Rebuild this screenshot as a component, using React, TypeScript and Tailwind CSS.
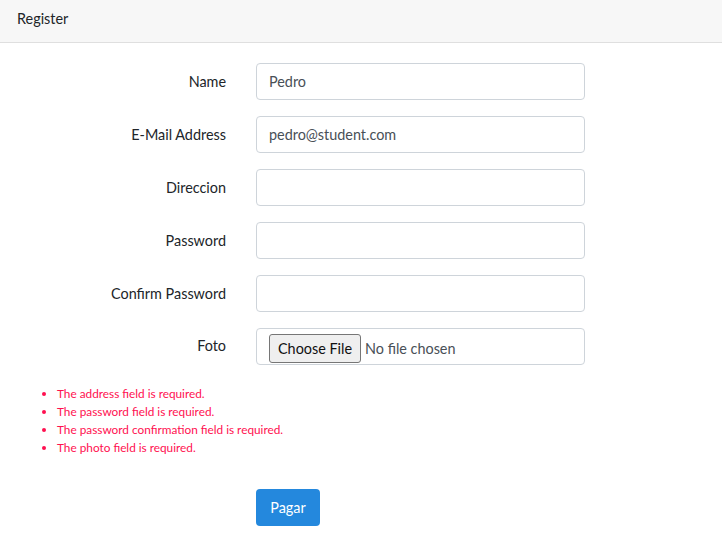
import React from 'react';

const FIELDS = [
  { label: 'Name', value: 'Pedro' },
  { label: 'E-Mail Address', value: 'pedro@student.com' },
  { label: 'Direccion', value: '' },
  { label: 'Password', value: '' },
  { label: 'Confirm Password', value: '' },
];

const ERRORS = [
  'The address field is required.',
  'The password field is required.',
  'The password confirmation field is required.',
  'The photo field is required.',
];

export default function App() {
  return (
    <div className="min-h-[546px] w-[722px] bg-white text-[#212529] font-['Lato','Noto_Sans',sans-serif]">
      {/* card header */}
      <div className="h-[43px] border-b border-[#dfdfdf] bg-[#f7f7f7] px-[17px] pb-[4px] flex items-center text-[14.4px]">
        Register
      </div>

      <div className="pt-[20px]">
        {FIELDS.map((f) => (
          <div key={f.label} className="flex items-center mb-[16px]">
            <label className="w-[226px] text-right text-[14.4px]">{f.label}</label>
            <input
              readOnly
              defaultValue={f.value}
              className="ml-[30px] w-[329px] h-[37px] border border-[#ced4da] rounded-[4px] px-[12px] text-[14.4px] text-[#495057] outline-none"
            />
          </div>
        ))}

        <div className="flex items-center">
          <label className="w-[226px] text-right text-[14.4px] pb-[2px]">Foto</label>
          <div className="ml-[30px] w-[329px] h-[37px] border border-[#ced4da] rounded-[4px] pl-[12px] pt-[4px] flex items-center text-[14.4px] text-[#495057]">
            <span className="h-[29px] px-[8px] flex items-center border border-[#767676] rounded-[3px] bg-[#efefef] text-[#111] text-[14.4px]">
              Choose File
            </span>
            <span className="ml-[4px]">No file chosen</span>
          </div>
        </div>

        <ul className="mt-[20px] pl-[57px] list-disc text-[11.8px] leading-[18px] text-[#ff1050] marker:text-[#ff1050]">
          {ERRORS.map((e) => (
            <li key={e}>{e}</li>
          ))}
        </ul>

        <div className="mt-[32px] pl-[256px]">
          <button className="w-[64px] h-[37px] rounded-[4px] bg-[#2488dd] text-white text-[14.4px]">Pagar</button>
        </div>
      </div>
    </div>
  );
}
